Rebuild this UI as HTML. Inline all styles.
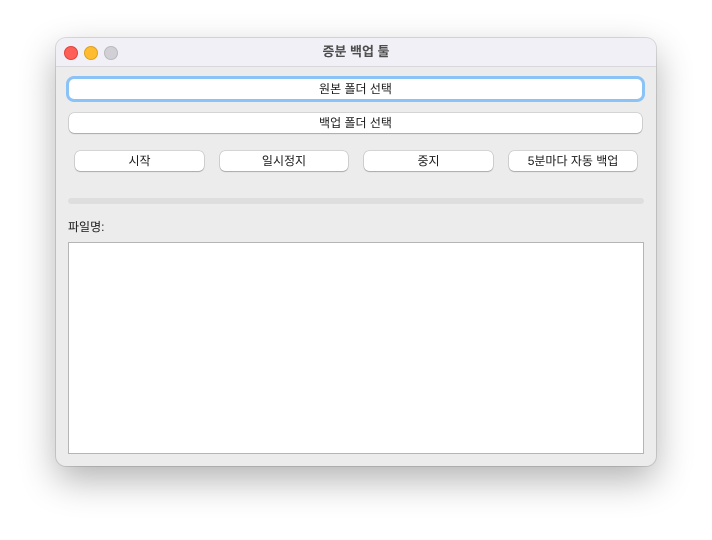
<!DOCTYPE html><html><head><meta charset="utf-8"><style>
body{margin:0;width:712px;height:540px;background:#fff;font-family:"Liberation Sans","Noto Sans CJK KR",sans-serif;position:relative;overflow:hidden}
.win{position:absolute;left:56px;top:38px;width:600px;height:428px;background:#ececec;border-radius:10px;box-shadow:0 14px 36px rgba(0,0,0,.3),0 0 0 1px rgba(0,0,0,.12);overflow:hidden}
.tb{height:28px;background:#f0f0f6;border-bottom:1px solid #d8d8dc;text-align:center;font-size:13px;font-weight:bold;color:#4d4d4d;line-height:28px}
.d{position:absolute;top:8px;width:12px;height:12px;border-radius:50%}
.b{position:absolute;background:#fff;border-radius:5px;box-shadow:0 0 0 .5px rgba(0,0,0,.2),0 1px 1px rgba(0,0,0,.2);font-size:12px;text-align:center;color:#1a1a1a;line-height:20px;height:20px}
</style></head><body><div class="win"><div class="tb">증분 백업 툴</div>
<div class="d" style="left:8px;background:#fe5f57;border:.5px solid #e0443e"></div>
<div class="d" style="left:28px;background:#febc2e;border:.5px solid #dea123"></div>
<div class="d" style="left:48px;background:#d0d0d6;border:.5px solid #bbb"></div>
<div class="b" style="left:13px;top:41px;width:573px;box-shadow:0 0 0 3px #8cc3f7,0 0 0 1px #5aa4f0">원본 폴더 선택</div>
<div class="b" style="left:13px;top:75px;width:573px">백업 폴더 선택</div>
<div class="b" style="left:19px;top:113px;width:129px">시작</div>
<div class="b" style="left:164px;top:113px;width:128px">일시정지</div>
<div class="b" style="left:308px;top:113px;width:129px">중지</div>
<div class="b" style="left:453px;top:113px;width:128px">5분마다 자동 백업</div>
<div style="position:absolute;left:12px;top:160px;width:576px;height:6px;border-radius:3px;background:#dedede"></div>
<div style="position:absolute;left:12px;top:180px;font-size:12px;color:#1a1a1a">파일명:</div>
<div style="position:absolute;left:12px;top:204px;width:574px;height:210px;background:#fff;border:1px solid #b5b5b5"></div>
</div></body></html>
